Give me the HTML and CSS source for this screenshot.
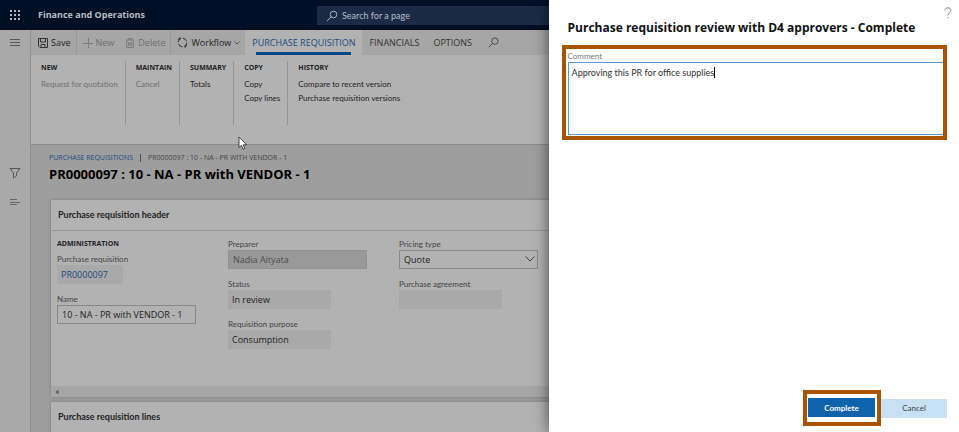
FILE: index.html
```html
<!DOCTYPE html>
<html lang="en">
<head>
<meta charset="utf-8">
<title>Finance and Operations</title>
<link rel="stylesheet" href="styles.css">
</head>
<body>
<div class="app">
  <header class="topbar">
    <button class="icon-btn" aria-label="Apps"><svg width="12" height="12" viewBox="0 0 12 12" fill="#b0b4bc"><path d="M1 1h2v2H1zM5 1h2v2H5zM9 1h2v2H9zM1 5h2v2H1zM5 5h2v2H5zM9 5h2v2H9zM1 9h2v2H1zM5 9h2v2H5zM9 9h2v2H9z"/></svg></button>
    <span class="brand">Finance and Operations</span>
    <label class="search">
      <svg width="12" height="12" viewBox="0 0 12 12" fill="none" stroke="#b0b4bc"><circle cx="7.500" cy="4.500" r="3.300"/><path d="M5.200 6.800L1 11"/></svg>
      <input type="text" placeholder="Search for a page" aria-label="Search for a page">
    </label>
  </header>
  <div class="workspace">
    <nav class="rail">
      <button class="icon-btn menu" aria-label="Menu"><svg width="12" height="12" viewBox="0 0 12 12" stroke="#555"><path d="M1 2.500h10M1 5.500h10M1 8.500h10"/></svg></button>
      <button class="icon-btn" aria-label="Filter"><svg width="12" height="12" viewBox="0 0 12 12" fill="none" stroke="#555"><path d="M1 1.500h10L7.500 6v3l-3 2V6z"/></svg></button>
      <button class="icon-btn" aria-label="Related"><svg width="12" height="12" viewBox="0 0 12 12" stroke="#666"><path d="M1 3.500h7M1 6.500h10M1 8.500h7"/></svg></button>
    </nav>
    <main class="main">
      <div class="toolbar">
        <button class="tool sep"><svg width="10" height="10" viewBox="0 0 10 10" fill="none" stroke="#333"><path d="M.5.5h9v9H2L.5 8zM2.500.5v3.500h5V.5M3 9.500V6.500h4v3"/></svg>Save</button>
        <button class="tool off"><svg width="10" height="10" viewBox="0 0 10 10" stroke="#7b7b7b"><path d="M5.500 0v10M0 5.500h10"/></svg>New</button>
        <button class="tool off sep"><svg width="10" height="10" viewBox="0 0 10 10" fill="none" stroke="#7b7b7b"><path d="M1 2h8M3.500 2V.5h3V2M1.700 2v7.500h6.600V2M3.700 4v4M5 4v4M6.300 4v4"/></svg>Delete</button>
        <button class="tool"><svg width="11" height="11" viewBox="0 0 11 11" fill="none" stroke="#333"><circle cx="5.500" cy="5.500" r="4.300" stroke-dasharray="5 1.700"/><path d="M.8 2.200h2v-2M10.200 8.800h-2v2"/></svg>Workflow<svg width="6" height="4" viewBox="0 0 6 4" fill="none" stroke="#555"><path d="M.5.7L3 3 5.500.7"/></svg></button>
        <a class="tab active" href="#pr">PURCHASE REQUISITION</a>
        <a class="tab" href="#fin">FINANCIALS</a>
        <a class="tab" href="#opt">OPTIONS</a>
        <button class="icon-btn find" aria-label="Find action"><svg width="11" height="11" viewBox="0 0 12 12" fill="none" stroke="#444"><circle cx="7.500" cy="4.500" r="3.500"/><path d="M5 7L1 11"/></svg></button>
      </div>
      <div class="ribbon">
        <section class="group"><h2>NEW</h2><a class="off" href="#q">Request for quotation</a></section>
        <section class="group"><h2>MAINTAIN</h2><a class="off" href="#c">Cancel</a></section>
        <section class="group"><h2>SUMMARY</h2><a href="#t">Totals</a></section>
        <section class="group"><h2>COPY</h2><a href="#cp">Copy</a><a href="#cl">Copy lines</a></section>
        <section class="group"><h2>HISTORY</h2><a href="#h">Compare to recent version</a><a href="#v">Purchase requisition versions</a></section>
      </div>
      <div class="page">
        <div class="crumbs"><a href="#list">PURCHASE REQUISITIONS</a><i></i><span>PR0000097 : 10 - NA - PR WITH VENDOR - 1</span></div>
        <h1>PR0000097 : 10 - NA - PR with VENDOR - 1</h1>
        <section class="card">
          <h3>Purchase requisition header</h3>
          <div class="form">
            <div class="col">
              <h4>ADMINISTRATION</h4>
              <div class="field"><label for="pr">Purchase requisition</label><input id="pr" class="ro short link" readonly value="PR0000097"></div>
              <div class="field"><label for="nm">Name</label><input id="nm" class="edit" value="10 - NA - PR with VENDOR - 1"></div>
            </div>
            <div class="col">
              <div class="field"><label for="pp">Preparer</label><input id="pp" class="locked" readonly value="Nadia Aityata"></div>
              <div class="field"><label for="st">Status</label><input id="st" class="ro" readonly value="In review"></div>
              <div class="field"><label for="rp">Requisition purpose</label><input id="rp" class="ro" readonly value="Consumption"></div>
            </div>
            <div class="col">
              <div class="field"><label for="pt">Pricing type</label>
                <span class="select"><select id="pt" class="edit"><option>Quote</option></select><svg width="10" height="6" viewBox="0 0 10 6" fill="none" stroke="#444"><path d="M.5.5L5 5 9.500.5"/></svg></span></div>
              <div class="field"><label for="pa">Purchase agreement</label><input id="pa" class="ro" readonly></div>
            </div>
          </div>
          <div class="scroller"><svg width="4" height="6" viewBox="0 0 4 6" fill="#555"><path d="M3.500.5v5L.5 3z"/></svg></div>
        </section>
        <section class="card"><h3>Purchase requisition lines</h3></section>
      </div>
    </main>
  </div>
  <svg class="pointer" width="10" height="14" viewBox="0 0 10 14" fill="#fff" stroke="#222" stroke-width=".8"><path d="M1 1v10.500l2.500-2.200 1.700 4 1.700-.8-1.700-3.700h3.500z"/></svg>
</div>
<aside class="dialog" role="dialog" aria-labelledby="dt">
  <button class="help" aria-label="Help"><svg width="8" height="12" viewBox="0 0 8 12" fill="none" stroke="#888"><path d="M1 3.500C1 1.800 2.200.8 4 .8s3 1 3 2.500C7 5.500 4 5.700 4 8.500M4 10v1.200"/></svg></button>
  <h2 id="dt">Purchase requisition review with D4 approvers - Complete</h2>
  <div class="comment">
    <label for="cm">Comment</label>
    <textarea id="cm">Approving this PR for office supplies</textarea>
    <span class="caret"></span>
  </div>
  <footer class="actions">
    <span class="mark"><button class="primary">Complete</button></span>
    <button class="secondary">Cancel</button>
  </footer>
</aside>
</body>
</html>
```
FILE: styles.css
```css
* { box-sizing: border-box; margin: 0; }
body {
  height: 100vh;
  overflow: hidden;
  background: #9e9e9e;
  font: 9px/14px Lato, "Noto Sans", sans-serif;
  color: #222;
}
button, input, select, textarea { font: inherit; color: inherit; border: 0; padding: 0; background: none; border-radius: 0; outline: 0; }
a { color: inherit; text-decoration: none; }
svg { flex: none; display: block; }
.app { display: flex; flex-direction: column; height: 100vh; }
.icon-btn { width: 30px; display: grid; place-items: center; flex: none; }

.topbar { display: flex; align-items: center; height: 30px; flex: none; background: #000f26; color: #b8bcc4; }
.brand { padding-left: 8px; width: 287px; font: 700 9px/14px "Open Sans", sans-serif; }
.search { display: flex; align-items: center; gap: 4px; flex: 1; height: 19px; padding-left: 9px; background: #1b2b47; margin-top: 1px; }
.search input { flex: 1; }
.search input::placeholder { color: #b8bcc4; opacity: 1; }

.workspace { display: flex; flex: 1; min-height: 0; }
.rail { width: 31px; flex: none; display: flex; flex-direction: column; gap: 17px; padding-top: 7px; background: #a9a9a9; border-right: 1px solid #8e8e8e; }
.rail .menu { margin-bottom: 101px; }
.main { flex: 1; min-width: 0; display: flex; flex-direction: column; }

.toolbar { display: flex; height: 25px; flex: none; background: #a6a6a6; }
.tool { display: flex; align-items: center; gap: 3px; padding: 0 7px; white-space: nowrap; font: 9px/14px "Open Sans", sans-serif; }
.tool.sep:first-child { padding-right: 5px; }
.tool + .tool { padding: 0 5px 0 6px; }
.sep { border-right: 1px solid #999; }
.off { color: #6f6f6f; }
.tab { padding: 6px 7px; white-space: nowrap; color: #333; font: 9px/14px "Open Sans", sans-serif; }
.tab.active { background: #b2b2b2; color: #1d4a80; position: relative; }
.tab.active::after { content: ""; position: absolute; left: 11px; right: 11px; bottom: 0; height: 3px; background: #004785; }
.find { margin-left: 0; }

.ribbon { display: flex; height: 90px; flex: none; padding: 6px 10px; background: #b2b2b2; border-bottom: 1px solid #8b8b8b; font-size: 8px; }
.group { display: flex; flex-direction: column; padding-right: 7px; margin-right: 10px; height: 64px; white-space: nowrap; border-right: 1px solid #969696; }
.group:last-child { border: 0; }
.group h2 { font-size: 7px; line-height: 14px; margin-bottom: 2px; font-family: "Open Sans", sans-serif; }

.page { padding: 6px 0 0 18px; flex: 1; }
.crumbs { display: flex; align-items: center; gap: 7px; font: 7px/14px "Open Sans", sans-serif; color: #444; }
.crumbs a { color: #1d4a80; }
.crumbs i { width: 1px; height: 8px; background: #555; }
h1 { font: 700 13px/18px "Open Sans", sans-serif; color: #000; margin-bottom: 17px; }
.card { margin: 0 0 5px 2px; background: #b2b2b2; box-shadow: 0 0 3px #777; }
.card h3 { font-size: 9px; line-height: 30px; padding-left: 7px; font-weight: 700; border-bottom: 1px solid #969696; }
.form { display: grid; grid-template-columns: 139px 139px 139px; column-gap: 32px; height: 155px; padding: 7px 6px 0; }
.col { display: flex; flex-direction: column; }
.col h4 { font: 700 7px/12px "Open Sans", sans-serif; margin-bottom: 3px; }
.field { display: flex; flex-direction: column; margin-bottom: 9px; }
.field label { font-size: 8px; line-height: 12px; color: #444; }
.field input, .field select { height: 19px; width: 100%; padding: 0 4px; font-family: "Open Sans", sans-serif; }
.field .ro { width: 103px; background: #a9a9a9; }
.field .short { width: 66px; }
.field .link { color: #1d4a80; }
.field .locked { background: #999; color: #4c4c4c; border: 1px solid #929292; }
.edit { border: 1px solid #888; }
.select { position: relative; }
.select select { appearance: none; }
.select svg { position: absolute; right: 3px; top: 6px; }
.scroller { height: 11px; padding: 3px 4px; background: #a6a6a6; }
.pointer { position: absolute; left: 238px; top: 136px; }

.dialog { position: absolute; inset: 0 0 0 auto; width: 42.8%; display: flex; flex-direction: column; padding: 7px 12px 6px 13px; background: #fff; box-shadow: 0 0 14px rgba(0, 0, 0, .6); }
.help { align-self: flex-end; margin-right: -5px; height: 10px; }
.dialog h2 { font: 700 12px/20px "Open Sans", sans-serif; margin: 1px 0 7px 6px; color: #111; white-space: nowrap; }
.comment { position: relative; display: flex; flex-direction: column; height: 95px; border: 4px solid #a85400; padding: 1px 0 1px 2px; }
.comment label { font-size: 8px; line-height: 12px; color: #777; }
.comment textarea { flex: 1; resize: none; border: 1px solid #5b9bd0; border-right: 0; padding: 3px 3px; color: #333; }
.caret { position: absolute; left: 148px; top: 18px; width: 1px; height: 11px; background: #111; }
.actions { display: flex; align-items: center; justify-content: flex-end; margin-top: auto; font-size: 8px; }
.mark { border: 4px solid #a85400; padding: 4px 2px 5px 1px; display: flex; }
.actions .primary { width: 67px; background: #0f62ac; color: #fff; font-weight: 700; }
.actions button { height: 19px; width: 66px; }
.secondary { background: #c7e0f4; color: #444; }
```
